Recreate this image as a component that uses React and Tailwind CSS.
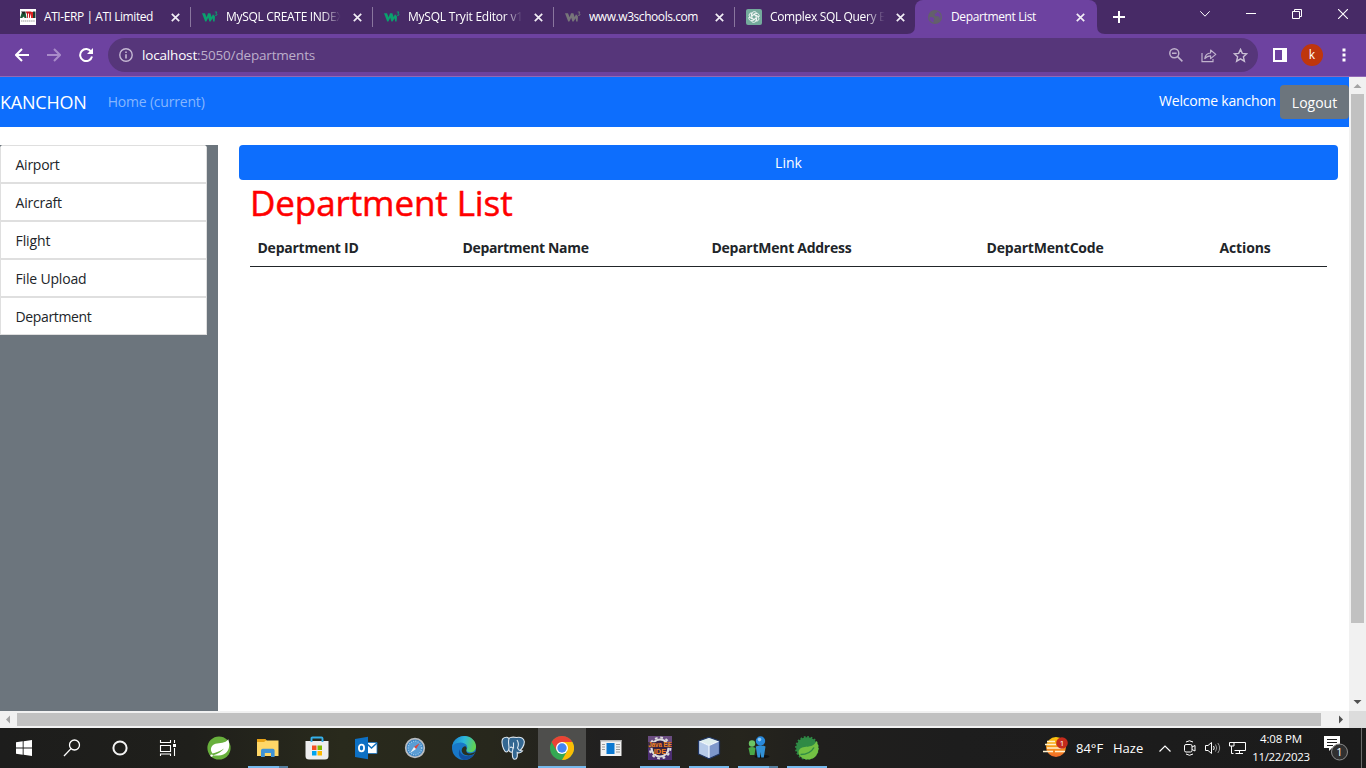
const tabs = [
  { icon: "ati", title: "ATI-ERP | ATI Limited", width: "w-[182px]", text: "tracking-[-0.43px]" },
  { icon: "w3", title: "MySQL CREATE INDEX", width: "w-[182px]", text: "tracking-[-0.3px]", fade: true },
  { icon: "w3", title: "MySQL Tryit Editor v1", width: "w-[181px]", text: "tracking-[-0.22px]", fade: true },
  { icon: "w3gray", title: "www.w3schools.com", width: "w-[181px]", text: "tracking-[-0.44px]" },
  { icon: "gpt", title: "Complex SQL Query E", width: "w-[181px]", text: "tracking-[-0.34px]", fade: true, last: true },
];

function W3({ color }) {
  return (
    <svg width="16" height="16" viewBox="0 0 16 16" fill={color}>
      <path d="M0 4.2H3L4.6 8.2L6 4.2H8.4L9.6 8L11 5.2L13 7.4L12.6 12.4H11.2L10.6 9.2L8.6 12.4H7.4L6.2 8.8L4.4 12.4H3.2Z" />
      <path d="M12.8 3H15L13.9 4.4Q15.4 4.7 15 5.9Q14.2 6.9 12.8 6.1" fill="none" stroke={color} strokeWidth="0.9" />
    </svg>
  );
}

function Favicon({ kind }) {
  if (kind === "ati")
    return (
      <svg width="16" height="16" viewBox="0 0 16 16">
        <rect width="16" height="16" fill="#fff" />
        <path d="M0 9 L2 3 H5.5 L6.5 9 H4.5L4 7.5L2 9Z" fill="#1d5b36" />
        <path d="M1 2.5 H5.5 L4 6 Z" fill="#222" />
        <path d="M5.5 2.5 H11.5 L9.6 9 H7.2 L7 5 Z" fill="#c3191f" />
        <path d="M8 4.5h1V9H8z" fill="#fff" />
        <path d="M12.8 2.5 H15.5 V9 H12.8 Z" fill="#1c3a30" />
        <path d="M11 3h2v6h-2z" fill="#d22" />
        <path d="M1 12 H15" stroke="#999" strokeDasharray="1.4 .5" strokeWidth="1" />
      </svg>
    );
  if (kind === "w3") return <W3 color="#0aa06e" />;
  if (kind === "w3gray") return <W3 color="#77757a" />;
  if (kind === "gpt")
    return (
      <svg width="16" height="16" viewBox="0 0 16 16" fill="none" stroke="#fff" strokeWidth="0.8">
        <rect width="16" height="16" rx="2" fill="#74aa9c" stroke="none" />
        {[0, 60, 120, 180, 240, 300].map((a) => (
          <path key={a} transform={`rotate(${a} 8 8)`} d="M6 9.1 V5 Q6 2.6 8.2 2.6 Q9.6 2.6 10.4 3.6 L7 5.6" />
        ))}
      </svg>
    );
  return (
    <svg width="16" height="16" viewBox="0 0 16 16">
      <circle cx="8" cy="8" r="7" fill="#63606b" />
      <path d="M2.2 8.4 Q5 7.6 6.8 9 Q8.2 10.6 6.4 11.4 L6.8 13.6 Q3 12.6 2.2 8.4Z M6 3.4 Q8 2 10.4 2.7 Q9.6 4.6 7.8 4.8 Q7 6.6 8.8 7 L12 7.6 Q13.4 9 12.4 10.8 Q13.9 8.6 13.6 6.4 Q12.6 3.4 10 2.6 Q7.4 2 6 3.4Z" fill="#6d42a0" />
    </svg>
  );
}

const Close = () => (
  <svg width="9" height="9" viewBox="0 0 9 9" stroke="#f1edf5" strokeWidth="1.7">
    <path d="M.8 .8 L8.2 8.2 M8.2 .8 L.8 8.2" />
  </svg>
);

function TabStrip() {
  return (
    <div className="flex h-[34px] shrink-0 bg-[#472a66] pl-[9px] text-[12px] text-white">
      {tabs.map((t) => (
        <div key={t.title} className={`flex items-center ${t.width} pl-[11px]`}>
          <Favicon kind={t.icon} />
          <div className={`ml-2 w-[117px] overflow-hidden whitespace-nowrap ${t.fade ? "[mask-image:linear-gradient(to_right,black_82%,transparent_98%)]" : ""} ${t.text}`}>
            {t.title}
          </div>
          <div className="ml-auto mr-[10px]"><Close /></div>
          <div className={t.last ? "w-px" : "h-5 w-px bg-[#8a769e]"} />
        </div>
      ))}
      <div className="relative -ml-px flex h-[34px] w-[182px] items-center rounded-t-lg bg-[#6d42a0] pl-3">
        <svg className="absolute -left-2 bottom-0" width="8" height="8"><path d="M8 0 V8 H0 Q8 8 8 0Z" fill="#6d42a0" /></svg>
        <svg className="absolute -right-2 bottom-0" width="8" height="8"><path d="M0 0 V8 H8 Q0 8 0 0Z" fill="#6d42a0" /></svg>
        <Favicon kind="globe" />
        <span className="ml-2 tracking-[-0.37px]">Department List</span>
        <div className="ml-auto mr-3"><Close /></div>
      </div>
      <div className="flex items-center pl-4">
        <svg width="12" height="12" stroke="#fff" strokeWidth="2"><path d="M6 0V12M0 6H12" /></svg>
      </div>
      <div className="ml-auto flex h-7 items-center text-white">
        <svg className="mr-[36px]" width="10" height="6" fill="none" stroke="#fff" strokeWidth="1"><path d="M.3 .3 L5 5.2 L9.7 .3" /></svg>
        <svg className="mr-[36px]" width="10" height="2"><path d="M0 0H10V1H0z" fill="#fff" /></svg>
        <svg className="mr-[36px]" width="10" height="10" fill="none" stroke="#fff"><path d="M.5 2.5H7.5V9.5H.5zM2.5 2.5V.5H9.5V7.5H7.5" /></svg>
        <svg className="mr-[18px]" width="10" height="10" stroke="#fff" strokeWidth="1.1"><path d="M0 0L10 10M10 0L0 10" /></svg>
      </div>
    </div>
  );
}

function Toolbar() {
  return (
    <div className="flex h-[43px] shrink-0 items-center border-b border-[#9169b6] bg-[#6d42a0]">
      <svg className="ml-[15px]" width="14" height="14" fill="none" stroke="#fff" strokeWidth="2"><path d="M14 7H1.5M7 1L1 7L7 13" /></svg>
      <svg className="ml-[18px]" width="14" height="14" fill="none" stroke="#a98bc9" strokeWidth="2"><path d="M0 7H12.5M7 1L13 7L7 13" /></svg>
      <svg className="ml-[18px]" width="14" height="14" viewBox="0 0 14 14" fill="none" stroke="#fff" strokeWidth="2"><path d="M12.2 3.8 A6 6 0 1 0 13 8.5" /><path d="M14 0V6H8z" fill="#fff" stroke="none" /></svg>
      <div className="ml-[15px] flex h-[34px] w-[1150px] items-center rounded-full bg-[#56367a] pl-[11px]">
        <svg width="14" height="14" fill="none" stroke="#c5b8d3" strokeWidth="1.4"><circle cx="7" cy="7" r="6.2" /><path d="M7 6.2V10.5M7 3.5V5" strokeWidth="1.6" /></svg>
        <div className="ml-[9px] text-[13.5px] tracking-[-0.17px] text-[#bcaeca]"><span className="text-white">localhost</span>:5050/departments</div>
        <svg className="ml-auto" width="14" height="14" fill="none" stroke="#bfb2cc" strokeWidth="1.5"><circle cx="5.3" cy="5.3" r="4.5" /><path d="M8.6 8.6L13.4 13.4M3 5.3H7.6" /></svg>
        <svg className="ml-[18px]" width="16" height="15" fill="none" stroke="#bfb2cc" strokeWidth="1.2"><path d="M1 5V13.6H12V11" /><path d="M3.8 10.6Q4.4 5.4 9.6 5V2L14.8 6.4L9.6 10.6V7.8Q6 7.8 3.8 10.6Z" strokeLinejoin="round" /></svg>
        <svg className="ml-[16px] mr-[10px]" width="15" height="15" viewBox="0 0 15 15" fill="none" stroke="#c9bfd4" strokeWidth="1.4"><path d="M7.5 1.4L9.3 5.4L13.7 5.8L10.4 8.8L11.4 13.2L7.5 10.9L3.6 13.2L4.6 8.8L1.3 5.8L5.7 5.4Z" /></svg>
      </div>
      <svg className="ml-[15px]" width="14" height="14"><path d="M0 0H14V14H0z M2 2V12H9V2z" fill="#fff" fillRule="evenodd" /></svg>
      <div className="ml-[14px] flex size-[22px] items-center justify-center rounded-full bg-[#bf360c] pb-px text-[12px] text-white">k</div>
      <svg className="ml-[19px]" width="4" height="14" fill="#fff"><path d="M.5 .5h3v3h-3zM.5 5.5h3v3h-3zM.5 10.5h3v3h-3z" /></svg>
    </div>
  );
}

const menu = [
  ["Airport", "tracking-[-0.25px]"],
  ["Aircraft", "tracking-[-0.22px]"],
  ["Flight", "tracking-[-0.08px]"],
  ["File Upload", "tracking-[-0.17px]"],
  ["Department", "tracking-[-0.35px]"],
];

function Page() {
  return (
    <div className="flex min-w-0 flex-1 flex-col bg-white text-[#212529]">
      <nav className="flex h-[50px] shrink-0 items-center bg-[#0d6efd] text-[14px] text-white">
        <span className="text-[18px] tracking-[-0.2px]">KANCHON</span>
        <span className="ml-[21px] pb-px tracking-[-0.2px] text-[#86b6fe]">Home (current)</span>
        <span className="ml-auto pb-[3px] tracking-[-0.2px]">Welcome kanchon</span>
        <button className="ml-1 h-[34px] w-[69px] rounded bg-[#6c757d]">Logout</button>
      </nav>
      <div className="mt-[18px] flex min-h-0 flex-1">
        <aside className="w-[218px] bg-[#6c757d]">
          <ul className="w-[207px] overflow-hidden rounded-t">
            {menu.map(([m, tracking]) => (
              <li key={m} className={`flex h-[38px] items-center border border-[#dfdfdf] bg-white pt-px pl-[14.5px] text-[14px] ${tracking}`}>{m}</li>
            ))}
          </ul>
        </aside>
        <main className="ml-[21px] w-[1099px]">
          <div className="flex h-[35px] items-center justify-center rounded bg-[#0d6efd] text-[14px] text-white">Link</div>
          <div className="px-[11px]">
            <h1 className="h-12 text-[35px] leading-[46px] font-medium tracking-[-0.1px] text-[red] [-webkit-text-stroke:0.5px_red]">Department List</h1>
            <table className="w-full table-fixed text-left text-[14px]">
              <thead>
                <tr className="h-[38px] border-b border-[#212529] [&>th]:p-0 [&>th]:pt-[2px] [&>th]:pl-[7.5px] [&>th]:font-bold">
                  <th className="w-[205px] tracking-[-0.25px]">Department ID</th>
                  <th className="w-[249px] tracking-[-0.34px]">Department Name</th>
                  <th className="w-[275px] tracking-[-0.27px]">DepartMent Address</th>
                  <th className="w-[233px] tracking-[-0.2px]">DepartMentCode</th>
                  <th className="tracking-[-0.14px]">Actions</th>
                </tr>
              </thead>
            </table>
          </div>
        </main>
      </div>
    </div>
  );
}

function VScroll() {
  return (
    <div className="flex w-[17px] flex-col items-center bg-[#f1f1f1]">
      <svg width="17" height="17"><path d="M4.5 11L8.5 7L12.5 11z" fill="#a3a3a3" /></svg>
      <div className="h-[529px] w-[13px] bg-[#c1c1c1]" />
      <svg className="mt-auto" width="17" height="17"><path d="M4.5 6L8.5 10L12.5 6z" fill="#505050" /></svg>
    </div>
  );
}

function HScroll() {
  return (
    <div className="flex h-[17px] shrink-0 items-center bg-[#f1f1f1]">
      <svg width="17" height="17"><path d="M10 4.5L6 8.5L10 12.5z" fill="#a3a3a3" /></svg>
      <div className="h-[13px] w-[1304px] bg-[#c1c1c1]" />
      <svg className="ml-[11px]" width="17" height="17"><path d="M7 4.5L11 8.5L7 12.5z" fill="#505050" /></svg>
      <div className="h-[17px] w-[17px] bg-[#dcdcdc]" />
    </div>
  );
}

const icons = {
  win: <path d="M4 6.3L10.7 5.3V11.6H4zM11.6 5.2L20 4V11.6H11.6zM4 12.4H10.7V18.7L4 17.7zM11.6 12.4H20V20L11.6 18.8z" fill="#fff" />,
  search: <g fill="none" stroke="#fff" strokeWidth="1.3"><circle cx="14.5" cy="9" r="5" /><path d="M11 12.6L4 20" /></g>,
  cortana: <circle cx="12" cy="12" r="6.6" fill="none" stroke="#f4f4f4" strokeWidth="2" />,
  task: <g fill="none" stroke="#fff" strokeWidth="1.1"><path d="M4.5 4V6.5H14.5V4M4.5 9.5H14.5V15.5H4.5zM4.5 20V18H14.5V20M18.5 4V7M18.5 12V20" /><path d="M17 8h3v3h-3z" fill="#fff" stroke="none" /></g>,
  spring: <g><circle cx="12" cy="12" r="11.6" fill="#68b03c" /><path d="M21.3 3.2C23 9 22.5 14 18.5 17.2C14.5 20.2 8.5 19.5 5 19.4C8.5 18.8 13 17.5 17 12.5C12.500 15.500 9 16.500 5.500 17.500C2.800 14 3.500 9.500 8.500 7.800C13 6.500 18 7.600 21.300 3.200Z" fill="#fff" /><circle cx="4.600" cy="19.600" r="1.200" fill="#fff" /></g>,
  explorer: <g><path d="M1 3H9.500L11 5H22V12H1z" fill="#e8a317" /><path d="M1 6H8L10 4.500H22.500V20H1z" fill="#ffd767" /><path d="M5 21V14.500Q5 12.800 6.700 12.800H17Q18.600 12.800 18.600 14.500V21H15V17H8.800V21z" fill="#3f93d6" /></g>,
  store: <g><path d="M.5 5H23.500V20Q23.500 23.600 20 23.600H4Q.5 23.600 .5 20z" fill="#eeeeee" /><path d="M6.500 6V2.500Q6.500 1.500 7.500 1.500H16.500Q17.500 1.500 17.500 2.500V6" fill="none" stroke="#35b0ea" strokeWidth="1.900" /><path d="M7 9.500h4.500v4.500H7z" fill="#f25022" /><path d="M12.500 9.500H17V14h-4.500z" fill="#7fba00" /><path d="M7 15h4.500v4.500H7z" fill="#00a4ef" /><path d="M12.500 15H17v4.500h-4.500z" fill="#ffb900" /></g>,
  outlook: <g><path d="M12 6.500H23V17.500H12z" fill="#fff" stroke="#1872bd" strokeWidth=".8" /><path d="M12 7L17.500 12L23 7" fill="none" stroke="#1170bf" strokeWidth="1.500" /><path d="M1 3L14 .8V23.200L1 21z" fill="#0d70c4" /><ellipse cx="7.500" cy="12" rx="2.600" ry="3.300" fill="none" stroke="#fff" strokeWidth="1.800" /></g>,
  safari: <g><circle cx="12" cy="12" r="9.300" fill="#3f86c4" stroke="#b9bcc0" strokeWidth="1.700" /><circle cx="12" cy="12" r="6.800" fill="#5a9dd4" stroke="#a8d1f0" strokeWidth="1.200" strokeDasharray="1 1.300" /><path d="M16.800 7L13 13L11 11z" fill="#e0463a" /><path d="M7.200 17L11 11L13 13z" fill="#eef3f8" /></g>,
  edge: <g><defs><linearGradient id="eg" x1="0" x2="1" y1=".2" y2=".4"><stop stopColor="#1b83cf" /><stop offset=".5" stopColor="#2db8dc" /><stop offset="1" stopColor="#62d34e" /></linearGradient></defs><circle cx="12" cy="12" r="12" fill="#1878c8" /><path d="M.2 11C1 4 6.500 0 12.300 0C19 0 24 5 24 10.500C24 14.500 20.800 16.600 17.500 16.300C14.800 16 13.800 14.800 14.600 13.600C16.800 10.500 13.500 6.500 8.500 6.600C4.500 6.800 1.200 8.500 .2 11Z" fill="url(#eg)" /><path d="M8 13C7.500 17.500 11 20 15 20C18 20 20.500 19 22 18C19.500 22.500 16 24.200 11.500 23.900C7 22 5.500 18 8 13Z" fill="#124f9e" /><path d="M14.300 14C13.500 17 18 19.300 23.300 15.500L22.300 17.800C17 20.800 10 19.500 9.700 14.500C9.700 12 11.500 10.200 13.500 10.200Q15.500 12 14.300 14Z" fill="#29301f" /></g>,
  pg: <g fill="#336791" stroke="#dde7ef" strokeWidth="1.100"><path d="M6 1.200C2 1 .8 3.500 1 6.500C1.300 11 3.500 16 5.500 16C7 16 8 13 8.500 12L9 3z" /><path d="M15.500 1.500C20 .5 23 2.500 23.300 5.500C23.500 9 20.500 14 18.500 14.500L21.500 15C20 17.200 17 17 16.200 16.500C16.500 20 16.500 23.300 13.700 23.300C10.800 23.300 11.500 19 11.300 16.200C8.500 16.500 7.500 14.500 8 12C8 8 6 2.200 9.500 1.500Q12 .8 15.500 1.500Z" /><path d="M12.500 6.500V12.500M16 4Q18.500 8 16.500 12L18.500 14.500M9 11.500Q11 10.500 12 12.500L11.300 16" fill="none" /></g>,
  chrome: <g><circle cx="12" cy="12" r="12" fill="#34a853" /><path d="M12 6H22.400A12 12 0 0 1 12 24L17.200 15z" fill="#fbbc05" /><path d="M1.600 6A12 12 0 0 1 22.400 6H12L6.800 15z" fill="#ea4335" /><circle cx="12" cy="12" r="6" fill="#fff" /><circle cx="12" cy="12" r="4.700" fill="#4285f4" /></g>,
  doc: <g><path d="M1.500 4H22.500V20H1.500z" fill="#f1f1f1" /><path d="M1.500 4H22.500V5.500H1.500z" fill="#b5b5b5" /><path d="M7.500 7H15.500V18H7.500z" fill="#0b78d1" /><path d="M3 8.500H6M3 11H6M3 13.500H6M17 8.500H21M17 11H21M17 13.500H21M17 16H21" stroke="#9b9b9b" /></g>,
  java: <g><path d="M0 0H24V24H0z" fill="#4c2e72" /><path d="M0 0H24V9H0z" fill="#6a4c80" /><circle cx="12" cy="12" r="8.500" fill="#33204c" stroke="#dcdcdc" strokeWidth="2.200" /><circle cx="12" cy="12" r="10.400" fill="none" stroke="#dcdcdc" strokeWidth="2" strokeDasharray="2.700 2.740" /><path d="M0 6H24V12H18V18H6V12H0z" fill="#38233c" opacity=".8" /><g fill="#f58220" fontFamily="Liberation Sans" fontWeight="700" textAnchor="middle"><text x="12" y="11.300" fontSize="7" textLength="23.500" lengthAdjust="spacingAndGlyphs">Java EE</text><text x="12" y="17.800" fontSize="7.500">IDE</text></g></g>,
  cube: <g strokeWidth="1.200" strokeLinejoin="round"><path d="M12 1.200L22.500 5L12 9.500L1.500 5z" fill="#dfeeee" /><path d="M1.500 5L12 9.500V22.800L1.500 18z" fill="#b7cbe9" /><path d="M22.500 5L12 9.500V22.800L22.500 18z" fill="#7d97cb" /><path d="M2 5L12 9.500L22 5M12 9.500V22" fill="none" stroke="#f1f7ff" /><path d="M12 1.200L22.500 5V18L12 22.800L1.500 18V5z" fill="none" stroke="#1f3564" /></g>,
  people: <g><circle cx="6" cy="7.500" r="3.200" fill="#6cc464" /><path d="M2.500 12Q6 10 9.500 12L8.500 19H4z" fill="#4aa948" /><ellipse cx="16" cy="20.500" rx="7.500" ry="1.800" fill="#101010" /><path d="M9.800 10.500Q14.500 8.500 19.500 10.500L17.800 21.500H15.200L14.600 16L14 21.500H11.500z" fill="#3190d5" /><circle cx="14.500" cy="5" r="4.700" fill="#2889dc" /><circle cx="13.500" cy="3.600" r="1.800" fill="#8fc9f5" /></g>,
  boot: <g><circle cx="12" cy="12" r="10.800" fill="#2f8a45" /><circle cx="12" cy="12" r="11" fill="none" stroke="#2f8a45" strokeWidth="2" strokeDasharray="1.700 1.750" /><path d="M21.500 5C24.500 11 24 17 20 21C16 24.500 9 24.500 5 20C1.500 15 5 11.500 9.500 11C14 10.500 19 10.500 21.500 5Z" fill="#72c043" /><path d="M5.500 18.500Q15 18.500 19 11.500" fill="none" stroke="#2f8a45" strokeWidth="1.400" /></g>,
};

const apps = [
  ["spring"], ["explorer", "split"], ["store"], ["outlook"], ["safari"], ["edge"], ["pg"],
  ["chrome", "active"], ["doc"], ["java", "run"], ["cube", "run"], ["people", "split"], ["boot", "run"],
];

function Glyph({ name }) {
  return <svg width="24" height="24" viewBox="0 0 24 24">{icons[name]}</svg>;
}

function Taskbar() {
  return (
    <div className="flex h-10 shrink-0 bg-[linear-gradient(90deg,#1d1d1c_0%,#1f1f1b_14%,#292a1c_25%,#27271c_36%,#212020_44%,#26251d_54%,#201f1d_60%,#1d1d1d_70%,#1b1b1b_100%)] text-white">
      {["win", "search", "cortana", "task"].map((n) => (
        <div key={n} className="flex w-12 items-center justify-center"><Glyph name={n} /></div>
      ))}
      <div className="ml-[3px] flex gap-px">
        {apps.map(([n, state]) => (
          <div key={n} className={`flex w-12 flex-col items-center pt-2 ${state === "active" ? "bg-[#4e4e4c]" : ""}`}>
            <Glyph name={n} />
            {state === "active" && <div className="mt-auto h-0.5 w-12 bg-[#76b9ed]" />}
            {state === "run" && <div className="mt-auto h-0.5 w-10 bg-[#76b9ed]" />}
            {state === "split" && (
              <div className="mt-auto flex h-0.5 w-10"><div className="w-[31px] bg-[#76b9ed]" /><div className="w-[9px] bg-[#557f9f]" /></div>
            )}
          </div>
        ))}
      </div>
      <div className="ml-auto flex items-center">
        <svg width="26" height="24" viewBox="0 0 26 24">
          <defs><linearGradient id="sun" x1="0" x2="0" y1="0" y2="1"><stop stopColor="#fdc70c" /><stop offset="1" stopColor="#f0692a" /></linearGradient></defs>
          <circle cx="13" cy="11" r="10" fill="url(#sun)" />
          <path d="M4 5.500H12M2 8.500H13M4 12H20M0 15.500H10M12 15.500H22" stroke="#fff1cf" strokeWidth="1.500" />
          <circle cx="19" cy="7" r="5.800" fill="#c42b1c" />
          <text x="19" y="10" fontSize="8" fill="#fff" textAnchor="middle" fontFamily="Open Sans">1</text>
        </svg>
        <span className="ml-[7px] w-[37px] pt-px text-[13px]">84°F</span>
        <span className="w-[46px] pt-px text-[13px]">Haze</span>
        <svg width="12" height="7" fill="none" stroke="#fff" strokeWidth="1.200"><path d="M.5 6.500L6 1L11.500 6.500" /></svg>
        <svg className="ml-[13px]" width="12" height="16" fill="none" stroke="#fff"><rect x=".5" y="4.500" width="7.500" height="7.500" rx="1.500" /><path d="M8 7L11 5.500V11L8 9.500M2 2Q5.500 -.5 9 2M2 14Q5.500 16.500 9 14" /></svg>
        <svg className="ml-[9px]" width="17" height="14" fill="none" stroke="#fff"><path d="M.5 4.500H3L6.500 1.500V12.500L3 9.500H.5z" /><path d="M8.500 5Q10 7 8.500 9" /><path d="M10.500 3.500Q13 7 10.500 10.500M12.800 2Q16.500 7 12.800 12" stroke="#999" /></svg>
        <svg className="ml-[7px]" width="17" height="14" fill="none" stroke="#fff"><path d="M5 1.500H16.500V9.500H5.500M10.500 9.500V12.500M6.500 12.500H14M.5 1.500H5V5H.5zM2.500 5V12.500H4.500" /></svg>
        <div className="ml-[6px] w-[58px] text-center text-[11.5px] leading-[18px] tracking-[-0.35px] whitespace-nowrap">
          <div className="tracking-[-0.15px]">4:08 PM</div>
          <div>11/22/2023</div>
        </div>
        <svg className="ml-[14px]" width="26" height="26" viewBox="0 0 26 26"><path d="M0 1H16V13H8L5 16V13H0z" fill="#fff" /><path d="M3 4.500H13M3 7.500H13M3 10.500H9" stroke="#1d1d1d" /><circle cx="15.500" cy="17" r="8" fill="#303030" stroke="#8b8b8b" /><text x="15.500" y="21" fontSize="11" fill="#fff" textAnchor="middle" fontFamily="Open Sans">1</text></svg>
        <div className="ml-[11px] mr-1 h-10 w-px bg-[#6b6b6b]" />
      </div>
    </div>
  );
}

export default function App() {
  return (
    <div className="flex h-[768px] w-[1366px] flex-col overflow-hidden font-['Open_Sans','Noto_Sans',sans-serif]">
      <TabStrip />
      <Toolbar />
      <div className="flex min-h-0 flex-1">
        <Page />
        <VScroll />
      </div>
      <HScroll />
      <Taskbar />
    </div>
  );
}
